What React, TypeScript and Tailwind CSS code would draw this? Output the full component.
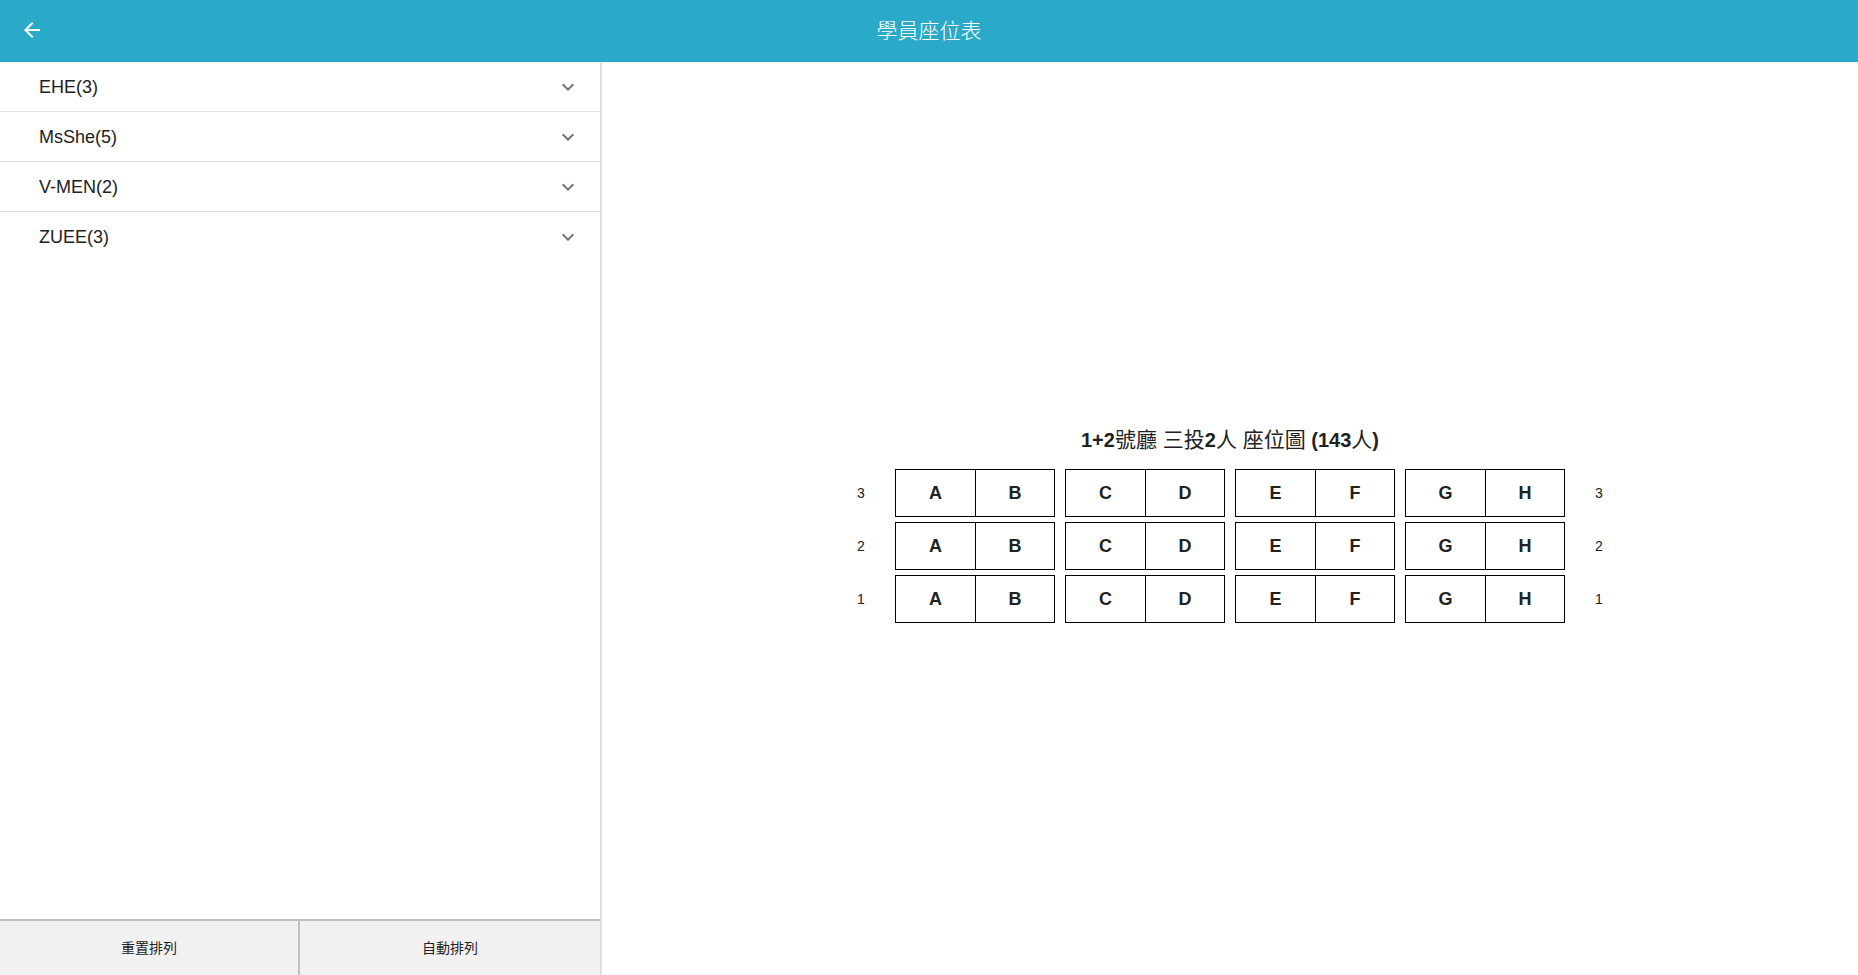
import { Fragment } from 'react';
import { MdArrowBack, MdExpandMore } from 'react-icons/md';

const teams = [
  { name: 'EHE', count: 3 },
  { name: 'MsShe', count: 5 },
  { name: 'V-MEN', count: 2 },
  { name: 'ZUEE', count: 3 },
];

const rows = [3, 2, 1];
const seatGroups = [
  ['A', 'B'],
  ['C', 'D'],
  ['E', 'F'],
  ['G', 'H'],
];

const title = ['1+2', '號廳 三投', '2', '人 座位圖', ' (143', '人', ')'];

function Header() {
  return (
    <header className="grid h-[62px] shrink-0 grid-cols-[1fr_auto_1fr] items-center bg-[#2aaac8] px-5 text-white">
      <button type="button" aria-label="返回" className="justify-self-start pb-0.5">
        <MdArrowBack className="size-6" />
      </button>
      <h1 className="text-[21px] font-light">學員座位表</h1>
    </header>
  );
}

function Sidebar() {
  return (
    <aside className="flex w-[602px] shrink-0 flex-col border-r-2 border-[#e0e0e0]">
      <ul className="flex-1">
        {teams.map((team) => (
          <li key={team.name} className="border-b border-[#e0e0e0] last:border-b-0">
            <button
              type="button"
              aria-expanded="false"
              className="flex h-[49px] w-full items-center justify-between pr-5 pl-[39px] text-left text-[18px]"
            >
              <span className="pt-0.5">{`${team.name}(${team.count})`}</span>
              <MdExpandMore className="size-6 text-[#757575]" />
            </button>
          </li>
        ))}
      </ul>
      <div className="grid h-14 grid-cols-2 border-t-2 border-[#bfbfbf] bg-[#f1f1f1] text-[14px]">
        <button type="button" className="border-r-2 border-[#bfbfbf]">
          重置排列
        </button>
        <button type="button">自動排列</button>
      </div>
    </aside>
  );
}

function RowLabel({ row }: { row: number }) {
  return <span className="w-12 text-center text-[14px]">{row}</span>;
}

function SeatMap() {
  return (
    <main className="flex flex-1 flex-col items-center justify-center">
      <h2 className="flex h-[55px] items-center pb-1 text-[20px] font-bold">
        <span>
          {title.map((part, i) => (
            <Fragment key={i}>
              {i % 2 === 1 ? <span className="text-[21px] font-normal">{part}</span> : part}
            </Fragment>
          ))}
        </span>
      </h2>
      <div className="flex flex-col gap-[5px]">
        {rows.map((row) => (
          <div key={row} className="flex items-center gap-2.5">
            <RowLabel row={row} />
            {seatGroups.map((group) => (
              <div
                key={group[0]}
                className="grid h-12 w-40 grid-cols-[80px_1fr] divide-x divide-black border border-black text-[18px] font-bold"
              >
                {group.map((seat) => (
                  <button key={seat} type="button">
                    {seat}
                  </button>
                ))}
              </div>
            ))}
            <RowLabel row={row} />
          </div>
        ))}
      </div>
    </main>
  );
}

export default function App() {
  return (
    <div className="flex min-h-screen flex-col bg-white font-['Liberation_Sans','Noto_Sans_CJK_TC',sans-serif] text-[#212121]">
      <Header />
      <div className="flex flex-1">
        <Sidebar />
        <SeatMap />
      </div>
    </div>
  );
}
